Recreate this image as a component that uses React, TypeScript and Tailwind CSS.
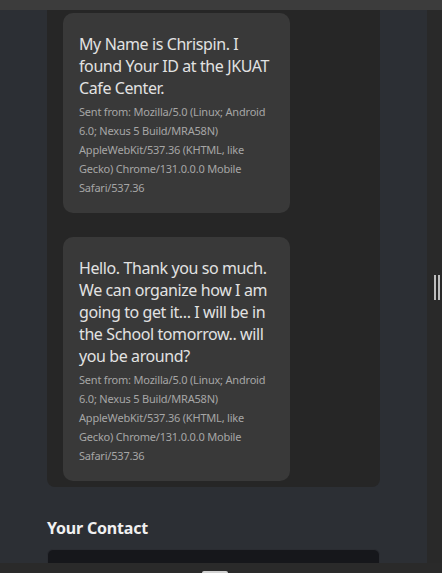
import React from "react";

const UA =
  "Sent from: Mozilla/5.0 (Linux; Android 6.0; Nexus 5 Build/MRA58N) AppleWebKit/537.36 (KHTML, like Gecko) Chrome/131.0.0.0 Mobile Safari/537.36";

const messages = [
  { id: 1, text: "My Name is Chrispin. I found Your ID at the JKUAT Cafe Center.", ua: UA },
  {
    id: 2,
    text: "Hello. Thank you so much. We can organize how I am going to get it... I will be in the School tomorrow.. will you be around?",
    ua: UA,
  },
];

function Bubble({ text, ua }: { text: string; ua: string }) {
  return (
    <div className="w-[227px] rounded-[10px] bg-[#393939] px-4 pt-[20px] pb-[16px]">
      <p className="text-[16px] leading-[22px] tracking-[-0.4px] text-[#e2e2e2]">{text}</p>
      <p className="mt-[3px] text-[11px] leading-[19px] tracking-[-0.2px] text-[#a6a6a6]">{ua}</p>
    </div>
  );
}

export default function App() {
  return (
    <div
      className="flex h-[573px] w-[442px] flex-col overflow-hidden bg-[#2c2f34]"
      style={{ fontFamily: '"Noto Sans", "Open Sans", sans-serif' }}
    >
      <div className="h-[10px] shrink-0 bg-[#3c3c3c]" />
      <div className="flex min-h-0 flex-1">
        <div className="min-w-0 flex-1 overflow-hidden bg-[#2c2f34]">
          <div className="ml-[47px] w-[333px] rounded-b-[8px] bg-[#262626] px-4 pt-[3px] pb-[6px]">
            <div className="flex flex-col gap-6">
              {messages.map((m) => (
                <Bubble key={m.id} text={m.text} ua={m.ua} />
              ))}
            </div>
          </div>
          <div className="ml-[47px] w-[333px]">
            <h2 className="mt-[29px] text-[16px] font-bold leading-[24px] tracking-[-0.2px] text-[#f0f0f0]">
              Your Contact
            </h2>
            <input
              className="mt-[9px] h-[44px] w-full rounded-[6px] border border-[#2a2c31] bg-[#16171b] px-4 text-[14px] text-[#ddd] placeholder:text-[#6b6e75] outline-none"
              placeholder="Enter your contact (optional)"
            />
          </div>
        </div>
        <div className="relative w-[15px] shrink-0 bg-[#292929]">
          <div className="absolute left-[7px] top-[265px] flex gap-[2px]">
            <span className="h-[25px] w-[2px] bg-[#bdbdbd]" />
            <span className="h-[25px] w-[2px] bg-[#bdbdbd]" />
          </div>
        </div>
      </div>
      <div className="relative h-[10px] shrink-0 bg-[#2a2a2a]">
        <div className="absolute bottom-0 left-[202px] h-[2px] w-[26px] rounded-t-sm bg-[#d2d2d2]" />
      </div>
    </div>
  );
}
